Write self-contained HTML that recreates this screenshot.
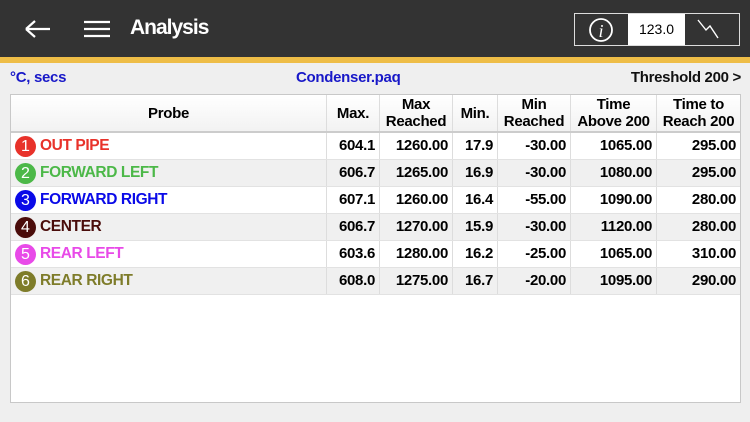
<!DOCTYPE html>
<html><head><style>
*{margin:0;padding:0;box-sizing:border-box}
body{width:750px;height:422px;background:#efefef;font-family:"Liberation Sans",sans-serif;position:relative;overflow:hidden}
.hdr{position:absolute;left:0;top:0;width:750px;height:57px;background:#333}
.yl{position:absolute;left:0;top:57px;width:750px;height:6px;background:#eebd47}
.t{position:absolute;white-space:nowrap;font-weight:bold}
.tbl{position:absolute;left:10px;top:94px;width:731px;height:309px;background:#fff;border:1px solid #c8c8c8}
.row{position:absolute;left:0;width:729px;height:27px;border-bottom:1px solid #e2e2e2}
.c{position:absolute;top:0;height:100%;border-left:1px solid #ddd;font-weight:bold;font-size:15px;text-align:right;padding-right:4px;line-height:26px;letter-spacing:-0.3px}
.h .c{text-align:center;padding:0;line-height:17px;display:flex;align-items:center;justify-content:center;font-size:15px}
.dot{position:absolute;left:4px;top:3px;width:21px;height:21px;border-radius:50%;color:#fff;font-size:16px;text-align:center;line-height:21px;font-weight:normal}
.nm{position:absolute;left:29px;top:0;line-height:26px;font-weight:bold;font-size:15.5px;letter-spacing:-0.4px}
</style></head><body>
<div class="hdr"></div>
<div class="yl"></div>
<svg style="position:absolute;left:24px;top:18px" width="28" height="22"><path d="M2 11H26M2 11L11 3M2 11L11 19" stroke="#fff" stroke-width="2.2" fill="none"/></svg>
<svg style="position:absolute;left:84px;top:20px" width="26" height="18"><path d="M0 2H26M0 9H26M0 16H26" stroke="#fff" stroke-width="2.2"/></svg>
<div class="t" style="left:130px;top:16px;font-size:21px;color:#fff;letter-spacing:-1px">Analysis</div>
<div style="position:absolute;left:574px;top:13px;width:166px;height:33px;border:1px solid #ddd;background:#333"></div>
<div style="position:absolute;left:628px;top:14px;width:57px;height:31px;background:#fff;font-size:14px;text-align:center;line-height:31px">123.0</div>
<svg style="position:absolute;left:586px;top:16px" width="30" height="28"><circle cx="15" cy="14" r="11" stroke="#fff" stroke-width="1.8" fill="none"/><text x="15" y="21" font-family="Liberation Serif" font-style="italic" font-size="18" fill="#fff" text-anchor="middle">i</text></svg>
<svg style="position:absolute;left:696px;top:18px" width="34" height="22"><path d="M2 2L10 12L14 8L22 20" stroke="#fff" stroke-width="1.4" fill="none"/></svg>
<div class="t" style="left:10px;top:69px;font-size:15px;color:#1818c8;letter-spacing:-0.3px">°C, secs</div>
<div class="t" style="left:296px;top:69px;font-size:15px;color:#1818c8;letter-spacing:-0.3px">Condenser.paq</div>
<div class="t" style="right:9px;top:69px;font-size:15px;color:#111;letter-spacing:-0.3px">Threshold 200 &gt;</div>
<div class="tbl">
<div class="row h" style="top:0;height:38px;border-bottom:2px solid #ccc;background:linear-gradient(#fff,#f2f2f2)">
<div class="c" style="left:0;width:315px;border:0">Probe</div>
<div class="c" style="left:315px;width:53px">Max.</div>
<div class="c" style="left:368px;width:73px">Max<br>Reached</div>
<div class="c" style="left:441px;width:45px">Min.</div>
<div class="c" style="left:486px;width:73px">Min<br>Reached</div>
<div class="c" style="left:559px;width:86px">Time<br>Above 200</div>
<div class="c" style="left:645px;width:84px">Time to<br>Reach 200</div>
</div>
<div class="row" style="top:38px;background:#fff"><div class="dot" style="background:#e8322a">1</div><div class="nm" style="color:#e8322a">OUT PIPE</div>
<div class="c" style="left:315px;width:53px">604.1</div><div class="c" style="left:368px;width:73px">1260.00</div><div class="c" style="left:441px;width:45px">17.9</div><div class="c" style="left:486px;width:73px">-30.00</div><div class="c" style="left:559px;width:86px">1065.00</div><div class="c" style="left:645px;width:84px">295.00</div></div>
<div class="row" style="top:65px;background:#f0f0f0"><div class="dot" style="background:#4cb848">2</div><div class="nm" style="color:#4cb848">FORWARD LEFT</div>
<div class="c" style="left:315px;width:53px">606.7</div><div class="c" style="left:368px;width:73px">1265.00</div><div class="c" style="left:441px;width:45px">16.9</div><div class="c" style="left:486px;width:73px">-30.00</div><div class="c" style="left:559px;width:86px">1080.00</div><div class="c" style="left:645px;width:84px">295.00</div></div>
<div class="row" style="top:92px;background:#fff"><div class="dot" style="background:#0a0ae8">3</div><div class="nm" style="color:#0a0ae8">FORWARD RIGHT</div>
<div class="c" style="left:315px;width:53px">607.1</div><div class="c" style="left:368px;width:73px">1260.00</div><div class="c" style="left:441px;width:45px">16.4</div><div class="c" style="left:486px;width:73px">-55.00</div><div class="c" style="left:559px;width:86px">1090.00</div><div class="c" style="left:645px;width:84px">280.00</div></div>
<div class="row" style="top:119px;background:#f0f0f0"><div class="dot" style="background:#4a0c0a">4</div><div class="nm" style="color:#4a0c0a">CENTER</div>
<div class="c" style="left:315px;width:53px">606.7</div><div class="c" style="left:368px;width:73px">1270.00</div><div class="c" style="left:441px;width:45px">15.9</div><div class="c" style="left:486px;width:73px">-30.00</div><div class="c" style="left:559px;width:86px">1120.00</div><div class="c" style="left:645px;width:84px">280.00</div></div>
<div class="row" style="top:146px;background:#fff"><div class="dot" style="background:#e84ae8">5</div><div class="nm" style="color:#e84ae8">REAR LEFT</div>
<div class="c" style="left:315px;width:53px">603.6</div><div class="c" style="left:368px;width:73px">1280.00</div><div class="c" style="left:441px;width:45px">16.2</div><div class="c" style="left:486px;width:73px">-25.00</div><div class="c" style="left:559px;width:86px">1065.00</div><div class="c" style="left:645px;width:84px">310.00</div></div>
<div class="row" style="top:173px;background:#f0f0f0"><div class="dot" style="background:#7e7c2a">6</div><div class="nm" style="color:#7e7c2a">REAR RIGHT</div>
<div class="c" style="left:315px;width:53px">608.0</div><div class="c" style="left:368px;width:73px">1275.00</div><div class="c" style="left:441px;width:45px">16.7</div><div class="c" style="left:486px;width:73px">-20.00</div><div class="c" style="left:559px;width:86px">1095.00</div><div class="c" style="left:645px;width:84px">290.00</div></div>
</div>
</body></html>
